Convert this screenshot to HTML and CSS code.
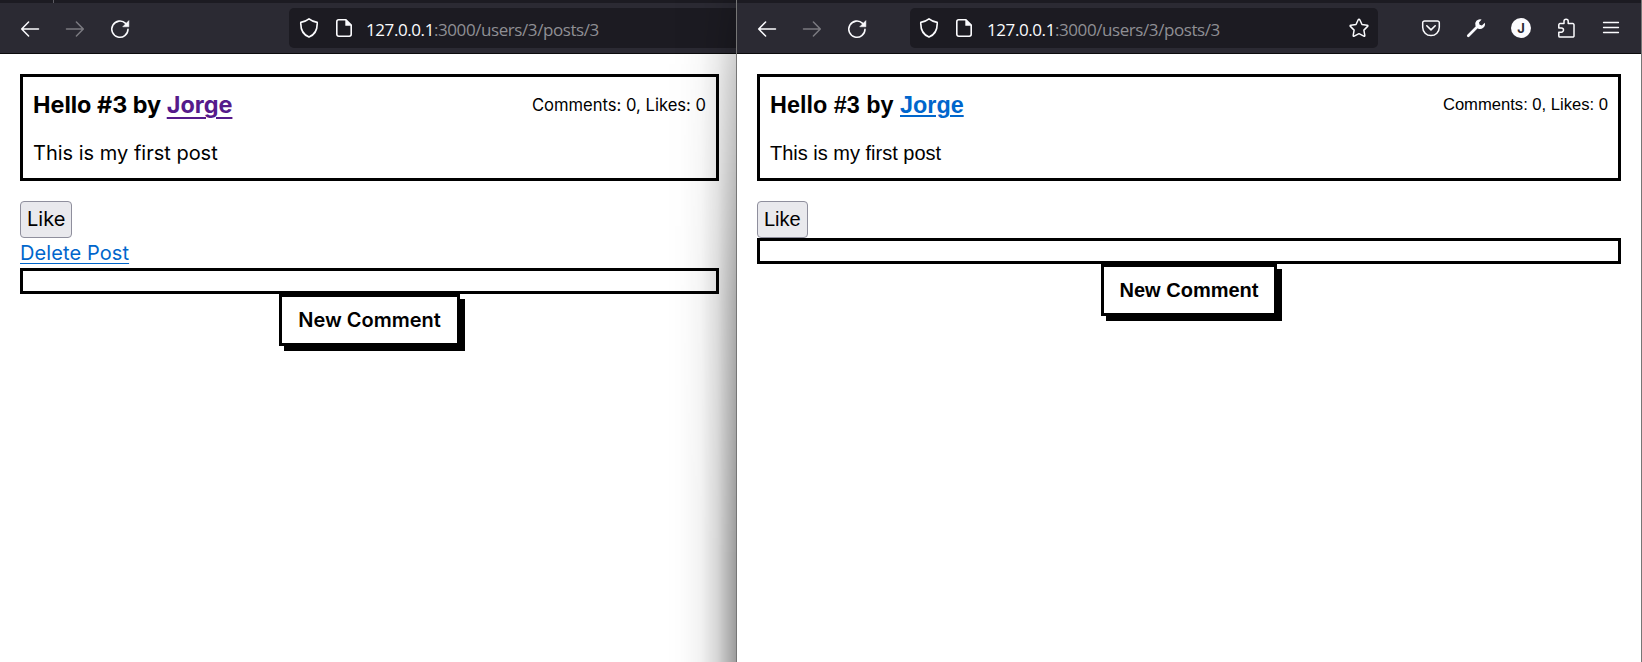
FILE: index.html
```html
<!DOCTYPE html>
<html lang="en">
<head>
<meta charset="utf-8">
<title>Post</title>
<link rel="stylesheet" href="styles.css">
</head>
<body>
<svg class="defs" aria-hidden="true">
  <symbol id="back" viewBox="0 0 20 20"><path d="M8.6 3 1.7 10l6.9 7M1.9 10H18.500" fill="none" stroke="currentColor" stroke-width="1.5" stroke-linecap="round" stroke-linejoin="round"/></symbol>
  <symbol id="forward" viewBox="0 0 20 20"><path d="M11.4 3l6.9 7-6.9 7M18.1 10H1.500" fill="none" stroke="currentColor" stroke-width="1.5" stroke-linecap="round" stroke-linejoin="round"/></symbol>
  <symbol id="reload" viewBox="0 0 20 20"><path d="M18 10.2A8.1 8.1 0 1 1 15.6 4.4" fill="none" stroke="currentColor" stroke-width="1.6" stroke-linecap="round"/><path d="M18.9 1.6v6.2h-6.2z" fill="currentColor" stroke="currentColor" stroke-width=".5" stroke-linejoin="round"/></symbol>
  <symbol id="shield" viewBox="0 0 20 20"><path d="M10 .9C8 2.500 4.900 3.900 1.800 4.400 1.500 10.800 3.800 16.500 10 19.100 16.200 16.500 18.500 10.800 18.200 4.400 15.100 3.900 12 2.500 10 .9Z" fill="none" stroke="currentColor" stroke-width="1.6" stroke-linejoin="round"/></symbol>
  <symbol id="page" viewBox="0 0 20 20"><path d="M4.700 1.800h7.200l5.300 5.300v9.200a1.900 1.900 0 0 1-1.900 1.900H4.700a1.900 1.900 0 0 1-1.900-1.900V3.700a1.900 1.900 0 0 1 1.900-1.900Z" fill="none" stroke="currentColor" stroke-width="1.600"/><path d="M11.300 1.500v6.200h6z" fill="currentColor"/></symbol>
  <symbol id="star" viewBox="0 0 20 20"><path d="M10 1.200q.5 0 .8.600l2.200 4.700 5.200.7q1.200.3.400 1.200l-3.700 3.700.9 5.200q.1 1.300-1 .8L10 15.700l-4.800 2.400q-1.100.5-1-.8l.9-5.200L1.400 8.400q-.8-.9.400-1.200l5.200-.7 2.200-4.700q.3-.6.8-.6z" fill="none" stroke="currentColor" stroke-width="1.500" stroke-linejoin="round"/></symbol>
  <symbol id="pocket" viewBox="0 0 20 20"><path d="M3.600 2.900h12.800a1.900 1.900 0 0 1 1.900 1.900v4.500a8.300 8.300 0 0 1-16.600 0V4.800a1.900 1.900 0 0 1 1.900-1.900Z" fill="none" stroke="currentColor" stroke-width="1.500"/><path d="M5.800 7.800 10 11.900l4.200-4.100" fill="none" stroke="currentColor" stroke-width="1.600" stroke-linecap="round" stroke-linejoin="round"/></symbol>
  <symbol id="wrench" viewBox="0 0 20 20"><path d="M2.300 17.700 11 9" stroke="currentColor" stroke-width="2.700" stroke-linecap="round"/><path d="M15.600 1.400a5 5 0 0 0-6.100 6.700l2.400 2.500a5 5 0 0 0 6.900-5.900l-2.900 2.700-2.300-.6-.6-2.400z" fill="currentColor"/></symbol>
  <symbol id="puzzle" viewBox="0 0 20 20"><path d="M8 5.600V3.300a2.100 2.100 0 0 1 4.200 0v2.300h4.600a1.200 1.200 0 0 1 1.200 1.200v11.100a1.200 1.200 0 0 1-1.200 1.200H4a1.200 1.200 0 0 1-1.200-1.200v-3.700h2.600a2.100 2.100 0 0 0 0-4.200H2.800V6.800A1.200 1.200 0 0 1 4 5.600z" fill="none" stroke="currentColor" stroke-width="1.500" stroke-linejoin="round"/></symbol>
  <symbol id="menu" viewBox="0 0 20 20"><path d="M2.500 4.500h15M2.500 9.500h15M2.500 14.500h15" stroke="currentColor" stroke-width="1.300" stroke-linecap="round"/></symbol>
</svg>

<section class="window window-left">
  <div class="tabstrip"><span class="tab-edge"></span></div>
  <div class="toolbar">
    <nav class="nav">
      <svg class="icon"><use href="#back"/></svg>
      <svg class="icon icon-off"><use href="#forward"/></svg>
      <svg class="icon"><use href="#reload"/></svg>
    </nav>
    <div class="urlbar">
      <svg class="icon"><use href="#shield"/></svg>
      <svg class="icon icon-page"><use href="#page"/></svg>
      <span class="url"><span class="host">127.0.0.1</span>:3000/users/3/posts/3</span>
    </div>
  </div>
  <main class="content">
    <article class="post">
      <div class="post-head">
        <h2 class="title">Hello #3 by <a class="author visited" href="#">Jorge</a></h2>
        <p class="stats">Comments: 0, Likes: 0</p>
      </div>
      <p class="text">This is my first post</p>
    </article>
    <button class="like">Like</button>
    <a class="delete" href="#">Delete Post</a>
    <div class="comments"></div>
    <a class="new-comment">New Comment</a>
  </main>
  <div class="shade"></div>
</section>

<section class="window window-right">
  <div class="tabstrip"></div>
  <div class="toolbar">
    <nav class="nav">
      <svg class="icon"><use href="#back"/></svg>
      <svg class="icon icon-off"><use href="#forward"/></svg>
      <svg class="icon"><use href="#reload"/></svg>
    </nav>
    <div class="urlbar">
      <svg class="icon"><use href="#shield"/></svg>
      <svg class="icon icon-page"><use href="#page"/></svg>
      <span class="url"><span class="host">127.0.0.1</span>:3000/users/3/posts/3</span>
      <svg class="icon icon-star"><use href="#star"/></svg>
    </div>
    <div class="tools">
      <svg class="icon"><use href="#pocket"/></svg>
      <svg class="icon"><use href="#wrench"/></svg>
      <span class="avatar">J</span>
      <svg class="icon"><use href="#puzzle"/></svg>
      <svg class="icon"><use href="#menu"/></svg>
    </div>
  </div>
  <main class="content">
    <article class="post">
      <div class="post-head">
        <h2 class="title">Hello #3 by <a class="author" href="#">Jorge</a></h2>
        <p class="stats">Comments: 0, Likes: 0</p>
      </div>
      <p class="text">This is my first post</p>
    </article>
    <button class="like">Like</button>
    <div class="comments"></div>
    <a class="new-comment">New Comment</a>
  </main>
</section>
</body>
</html>
```
FILE: styles.css
```css
* { box-sizing: border-box; }
body { margin: 0; height: 662px; display: flex; overflow: hidden; background: #fff; color: #000; }
.defs { display: none; }

.window { height: 662px; background: #fff; position: relative; overflow: hidden; }
.window-left { width: 736px; font-family: Inter, sans-serif; }
.window-right { width: 906px; border-left: 1px solid #767676; border-right: 1px solid #767676; font-family: "Liberation Sans", Arial, sans-serif; }

/* browser chrome */
.tabstrip { height: 3px; background: #1c1b22; }
.tab-edge { display: block; width: 1px; height: 3px; margin-left: 53px; background: #5c5b62; }
.toolbar { height: 51px; display: flex; align-items: center; padding: 0 11px 0 20px; background: #2b2a33; border-bottom: 1px solid #0c0c0d; color: #fbfbfe; }
.nav { display: flex; gap: 25px; margin-top: 2px; }
.icon { display: block; width: 20px; height: 20px; flex: none; }
.icon-off { color: #7b7a80; }
.urlbar { display: flex; align-items: center; height: 40px; padding: 0 9px 0 10px; background: #1c1b22; border-radius: 5px; }
.window-left .urlbar { width: 480px; margin-left: 159px; flex: none; }
.window-right .urlbar { width: 468px; margin-left: 43px; padding-left: 9px; }
.icon-page { margin-left: 15px; }
.url { margin-left: 12px; padding-top: 4px; font: 17px/24px "Open Sans", sans-serif; letter-spacing: -0.42px; color: #8f8f94; white-space: nowrap; }
.window-right .url { margin-left: 13px; }
.host { color: #fbfbfe; }
.icon-star { margin-left: auto; }
.tools { display: flex; align-items: center; gap: 25px; margin-left: 43px; }
.avatar { width: 20px; height: 20px; border-radius: 50%; background: #fbfbfe; color: #2b2a33; font: bold 13px/20px Inter, sans-serif; text-align: center; }

/* page */
.content { display: flex; flex-direction: column; align-items: flex-start; padding: 20px; font-size: 20px; line-height: 24px; }
.window-left .content { padding-right: 17px; }
.post { width: 100%; height: 107px; padding: 14px 10px 0; border: 3px solid #000; margin-bottom: 20px; }
.post-head { display: flex; justify-content: space-between; height: 28px; }
.title { margin: 0; font-size: 23.400px; line-height: 28px; font-weight: 700; }
.author { color: #0066cc; text-decoration-thickness: 2px; text-underline-offset: 2px; }
.author.visited { color: #551a8b; text-underline-offset: 4px; }
.stats { margin: 0; font-size: 16.600px; line-height: 28px; }
.window-right .stats { line-height: 27px; }
.text { margin: 22px 0 0; line-height: 24px; }
.like { height: 37px; padding: 0 6px 2px; border: 1px solid #8f8f9d; border-radius: 4px; background: #e9e9ed; color: #000; font: inherit; }
.delete { height: 30px; line-height: 30px; color: #0066cc; letter-spacing: .1px; text-decoration-thickness: 1px; text-underline-offset: 3px; }
.comments { width: 100%; height: 26px; border: 3px solid #000; }
.new-comment { align-self: center; height: 52px; padding: 0 16px; border: 3px solid #000; line-height: 46px; font-weight: 600; box-shadow: 5px 5px 0 #000; background: #fff; }
.window-right .new-comment { padding: 0 15.500px; }

/* shadow that the front window casts over the one behind */
.shade { position: absolute; top: 0; right: 0; width: 70px; height: 662px; background: linear-gradient(to right, rgba(0,0,0,0), rgba(0,0,0,.01) 25%, rgba(0,0,0,.05) 50%, rgba(0,0,0,.16) 73%, rgba(0,0,0,.39)); mask-image: linear-gradient(to bottom, rgba(0,0,0,.3), rgba(0,0,0,.55) 12%, rgba(0,0,0,.85) 45%, #000 85%); pointer-events: none; }
```
